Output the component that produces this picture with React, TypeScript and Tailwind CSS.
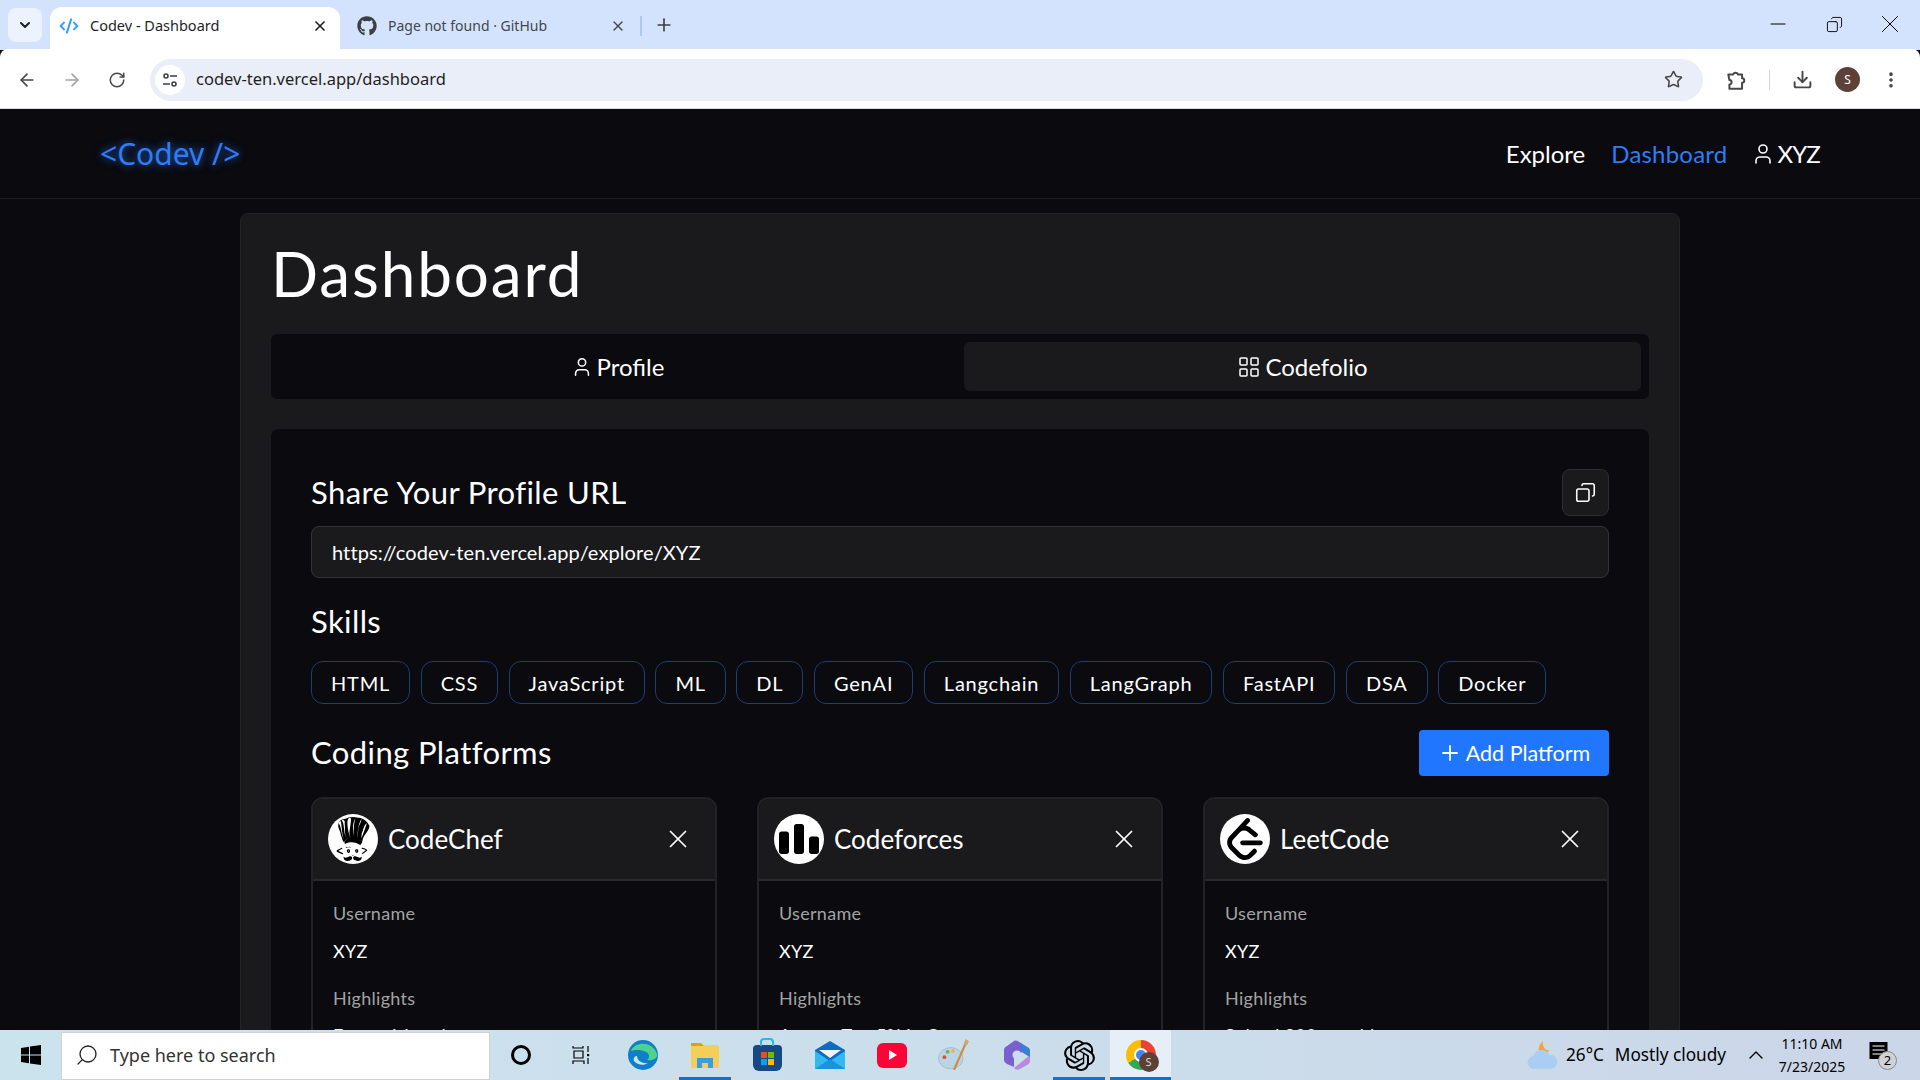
import { useState } from "react";
import { ArrowLeft, ArrowRight, ChevronDown, ChevronUp, CodeXml, Copy, Download, EllipsisVertical, LayoutGrid, Minus, Plus, RotateCw, Search, Star, User, X } from "lucide-react";
import { FaGithub } from "react-icons/fa";
import { SiCodechef, SiCodeforces, SiLeetcode, SiOpenai } from "react-icons/si";

const skills = ["HTML", "CSS", "JavaScript", "ML", "DL", "GenAI", "Langchain", "LangGraph", "FastAPI", "DSA", "Docker"];

const platforms = [
  { name: "CodeChef", logo: <SiCodechef size={44} />, highlight: "Expert I-Level" },
  { name: "Codeforces", logo: <SiCodeforces size={40} />, highlight: "Among Top 5% in Contests" },
  { name: "LeetCode", logo: <SiLeetcode size={42} />, highlight: "Solved 300+ problems" },
];

function BrowserChrome() {
  return (
    <div className="shrink-0 font-['Noto_Sans',sans-serif]">
      <div className="flex h-[50px] items-end bg-[#d3e3fd] pl-2">
        <div className="mb-[8px] mr-[8px] flex h-[34px] w-[34px] items-center justify-center rounded-lg bg-[#ecf2fe]">
          <ChevronDown size={16} strokeWidth={3} className="text-[#1f1f1f]" />
        </div>
        <div className="flex h-[43px] w-[290px] items-center rounded-t-xl bg-white pb-[6px] pl-[9px] pr-[12px]">
          <CodeXml size={20} strokeWidth={2.4} className="text-[#3b9cf6]" />
          <span className="ml-[11px] flex-1 text-[14.5px] text-[#1f1f1f]">Codev - Dashboard</span>
          <X size={16} strokeWidth={2.5} className="text-[#1f1f1f]" />
        </div>
        <div className="flex h-[43px] w-[316px] items-center pb-[6px] pl-[17px] pr-[14px]">
          <FaGithub size={20} className="text-[#3c4043]" />
          <span className="ml-[11px] flex-1 text-[14px] text-[#44474a]">Page not found · GitHub</span>
          <X size={16} strokeWidth={2} className="text-[#44474a]" />
          <span className="ml-[14px] h-5 w-[2px] bg-[#a8c7fa]" />
        </div>
        <div className="mb-[11px] ml-[-6px] flex h-[28px] w-[28px] items-center justify-center">
          <Plus size={20} strokeWidth={2} className="text-[#3c4043]" />
        </div>
        <div className="ml-auto flex h-[50px] items-center pb-[2px] pr-[2px] text-black">
          <div className="flex w-[56px] justify-center"><Minus size={24} strokeWidth={1} /></div>
          <div className="flex w-[56px] justify-center"><Copy size={17} strokeWidth={1.3} className="-scale-x-100" /></div>
          <div className="flex w-[56px] justify-center"><X size={30} strokeWidth={0.8} /></div>
        </div>
      </div>
      <div className="-mt-px flex h-[60px] items-center rounded-t-lg border-b border-[#dadce0] bg-white pl-[17px] pr-[19px] pt-[2px] text-[#474747]">
        <ArrowLeft size={20} strokeWidth={2} />
        <ArrowRight size={20} strokeWidth={2} className="ml-[25px] text-[#a3a3a3]" />
        <RotateCw size={18} strokeWidth={2} className="ml-[26px]" />
        <div className="ml-[24px] flex h-[42px] flex-1 items-center rounded-full bg-[#e9eef8] pl-[5px] pr-[20px]">
          <div className="flex h-[30px] w-[30px] items-center justify-center rounded-full bg-white">
            <svg viewBox="0 0 16 16" className="h-4 w-4" fill="none" stroke="#3c4043" strokeWidth="1.6">
              <circle cx="4" cy="4" r="2" /><path d="M8 4h7M1 12h7" /><circle cx="12" cy="12" r="2" />
            </svg>
          </div>
          <span className="ml-[11px] flex-1 text-[16.5px] text-[#1f1f1f]">codev-ten.vercel.app/dashboard</span>
          <Star size={19} strokeWidth={2} className="text-[#474747]" />
        </div>
        <svg viewBox="0 0 20 20" className="ml-[22px] h-[22px] w-[22px]" fill="none" stroke="#474747" strokeWidth="1.800" strokeLinejoin="round">
          <path d="M3 5h4.500a2.200 2.200 0 0 1 4.200 0H15.500v3.500a2 2 0 0 1 0 4v5.500H4v-4a2 2 0 0 0 0-4z" />
        </svg>
        <span className="ml-[22px] h-[20px] w-px bg-[#c5d9f7]" />
        <Download size={21} strokeWidth={2.2} className="ml-[22px]" />
        <div className="ml-[22px] flex h-[25px] w-[25px] items-center justify-center rounded-full bg-[#5d4037] text-[12px] text-white">S</div>
        <EllipsisVertical size={20} strokeWidth={2.4} className="ml-[21px]" />
      </div>
    </div>
  );
}

function Navbar() {
  return (
    <nav className="flex h-[90px] shrink-0 items-center justify-between border-b border-[#1f1f23] pl-[100px] pr-[100px]">
      <span className="text-[30px] text-[#2f7cf6] [text-shadow:0_0_8px_rgba(47,124,246,0.8)] font-['Noto_Sans',sans-serif]">&lt;Codev /&gt;</span>
      <div className="flex items-center text-[24px]">
        <span>Explore</span>
        <span className="ml-[26px] tracking-[0.2px] text-[#2f7cf6]">Dashboard</span>
        <User size={24} strokeWidth={1.6} className="ml-[24px] mr-[2px]" />
        <span className="tracking-[-0.8px]">XYZ</span>
      </div>
    </nav>
  );
}

function PlatformCard({ name, logo, highlight }: { name: string; logo: React.ReactNode; highlight: string }) {
  return (
    <div className="overflow-hidden rounded-xl border-2 border-[#232326]">
      <div className="flex h-[82px] items-center border-b-2 border-[#2a2a2d] bg-[#1a1a1d] pl-[15px] pr-[22px]">
        <div className="flex h-[50px] w-[50px] shrink-0 items-center justify-center rounded-full bg-white text-black">{logo}</div>
        <span className="ml-[10px] flex-1 text-[26px] leading-none">{name}</span>
        <X size={30} strokeWidth={1.4} />
      </div>
      <div className="px-5 pt-[18px] pb-6 text-[18px] leading-[28px] tracking-[0.3px]">
        <p className="text-[#a3a3a3]">Username</p>
        <p className="mt-[10px]">XYZ</p>
        <p className="mt-[19px] text-[#a3a3a3]">Highlights</p>
        <p className="mt-[9px]">{highlight}</p>
      </div>
    </div>
  );
}

function Taskbar() {
  return (
    <div className="relative z-10 flex h-[50px] shrink-0 items-center bg-gradient-to-r from-[#cbe3ed] via-[#cbdeeb] to-[#cbd6e8] font-['Noto_Sans',sans-serif] text-black">
      <div className="flex w-[61px] justify-center">
        <svg viewBox="0 0 20 20" className="h-[20px] w-[20px]" fill="#000">
          <path d="M0 3l8-1.200V9.500H0zM9 1.600L20 0v9.500H9zM0 10.500h8v7.700L0 17zM9 10.500h11V20L9 18.400z" />
        </svg>
      </div>
      <div className="flex h-[48px] w-[429px] items-center self-end border border-[#d0d0d0] bg-white pb-[2px] pl-[13px]">
        <Search size={24} strokeWidth={1.3} className="-scale-x-100 text-[#222]" />
        <span className="ml-[11px] text-[18px] text-[#333]">Type here to search</span>
      </div>
      <div className="flex w-[62px] justify-center">
        <span className="h-[20px] w-[20px] rounded-full border-[3px] border-black" />
      </div>
      <div className="flex w-[60px] justify-center">
        <svg viewBox="0 0 20 20" className="h-5 w-5" fill="none" stroke="#000" strokeWidth="1.200">
          <path d="M1 1v2h10V1M2 6h9v7H2zM1 19v-3h11v3M16 1v6M16 13v6" />
          <rect x="15" y="9" width="2.200" height="2.200" fill="#000" stroke="none" />
        </svg>
      </div>
      <div className="flex w-[62px] justify-center">
        <svg viewBox="0 0 30 30" className="h-[30px] w-[30px]">
          <circle cx="15" cy="15" r="15" fill="#0f7fc9" />
          <path d="M3 11C7 1 25 1 29 14c1 5-5 7-10 6 3-2 3-6-1-8C13 9 6 10 3 11z" fill="#4fd38c" />
          <path d="M9 16c0 5 6 8 11 7-4 3-11 2-14-2-1-3 1-5 3-5z" fill="#cbe3ed" />
        </svg>
      </div>
      <div className="relative flex h-[50px] w-[62px] items-center justify-center">
        <svg viewBox="0 0 28 26" className="h-[26px] w-[28px]">
          <path d="M0 3c0-1 1-2 2-2h8l2 2h14c1 0 2 1 2 2v19c0 1-1 2-2 2H2c-1 0-2-1-2-2z" fill="#f5ce57" />
          <path d="M0 1h10l3 3H0z" fill="#dba111" />
          <path d="M6 26v-10h16v10h-5v-5h-6v5z" fill="#3f9bdb" />
        </svg>
        <span className="absolute bottom-0 left-[5px] right-[5px] h-[3px] bg-[#0a74d0]" />
      </div>
      <div className="flex w-[62px] justify-center">
        <div className="relative mt-[6px] flex h-[26px] w-[29px] items-center justify-center rounded-b-md rounded-t-sm bg-[#174a84]">
          <span className="absolute -top-[7px] h-[8px] w-[14px] rounded-t border-2 border-b-0 border-[#2bb6ee]" />
          <span className="grid grid-cols-2 gap-px">
            <i className="h-[6px] w-[6px] bg-[#e8501f]" /><i className="h-[6px] w-[6px] bg-[#7ab800]" />
            <i className="h-[6px] w-[6px] bg-[#00a4ef]" /><i className="h-[6px] w-[6px] bg-[#ffb900]" />
          </span>
        </div>
      </div>
      <div className="flex w-[63px] justify-center">
        <svg viewBox="0 0 30 28" className="h-[28px] w-[30px]">
          <path d="M0 9L15 0l15 9v19H0z" fill="#0b6cc0" />
          <path d="M4 9h22L15 17z" fill="#f2f4f6" />
          <path d="M0 10l15 10 15-10v18H0z" fill="#32b9ef" />
          <path d="M0 28l15-10 15 10z" fill="#1a93de" />
        </svg>
      </div>
      <div className="flex w-[62px] justify-center">
        <div className="flex h-[25px] w-[30px] items-center justify-center rounded-md bg-[#fb0537]">
          <span className="ml-[2px] border-y-[5px] border-l-[8px] border-y-transparent border-l-white" />
        </div>
      </div>
      <div className="flex w-[62px] justify-center">
        <svg viewBox="0 0 30 30" className="h-[32px] w-[32px]">
          <ellipse cx="12" cy="18" rx="11.500" ry="10" fill="#b9d4e4" stroke="#8fa9ba" strokeWidth="0.500" />
          <circle cx="6" cy="17" r="1.800" fill="#e34c3c" /><circle cx="9" cy="12" r="1.800" fill="#6fb544" /><circle cx="14" cy="11" r="1.800" fill="#f2b33d" />
          <path d="M26 4L15 29" stroke="#d4893b" strokeWidth="2" />
          <path d="M24 5l2-5 3 2-2 4z" fill="#c9a875" />
        </svg>
      </div>
      <div className="flex w-[63px] justify-center">
        <svg viewBox="0 0 26 30" className="h-[30px] w-[26px]">
          <path d="M3 6l7-5c2-1 4 0 5 1l8 5c2 1 3 2 3 4v6l-8-5-8 6v9L3 24C1 23 0 21 0 20V10c0-2 1-3 3-4z" fill="#7a5fd0" />
          <path d="M26 15v6c0 2-1 3-3 4l-7 4c-2 1-3 1-5 0l-1-1 16-13z" fill="#b78ae0" />
          <path d="M15 2l8 5c2 1 3 2 3 4v6l-8-5z" fill="#3a7fd6" />
          <circle cx="13" cy="15" r="4.500" fill="#cbdeeb" />
        </svg>
      </div>
      <div className="relative flex h-[50px] w-[62px] items-center justify-center">
        <SiOpenai size={31} />
        <span className="absolute bottom-0 left-[5px] right-[5px] h-[3px] bg-[#0a74d0]" />
      </div>
      <div className="relative flex h-[50px] w-[61px] items-center justify-center bg-[#e6eff7]">
        <div className="relative h-[30px] w-[30px] rounded-full bg-[conic-gradient(#ea4335_0_33%,#34a853_33%_66%,#fbbc05_66%_100%)]">
          <span className="absolute left-[8px] top-[8px] h-[14px] w-[14px] rounded-full border-2 border-white bg-[#4285f4]" />
          <span className="absolute -bottom-[2px] -right-[3px] flex h-5 w-5 items-center justify-center rounded-full bg-[#5d4037] text-[11px] text-[#ddd]">S</span>
        </div>
        <span className="absolute bottom-0 left-0 right-0 h-[3px] bg-[#0a74d0]" />
      </div>
      <div className="ml-auto flex h-[50px] items-center pr-[15px]">
        <svg viewBox="0 0 30 28" className="h-[30px] w-[32px]">
          <path d="M12 12c-2-4-1-8 3-11-1 5 2 8 6 9-3 3-6 3-9 2z" fill="#eea83a" />
          <path d="M7 27a6 6 0 0 1-1-12 8 8 0 0 1 15-1 6.500 6.500 0 0 1 2 13z" fill="#a9cdf3" />
        </svg>
        <span className="ml-[7px] text-[17.2px] leading-none">26°C</span>
        <span className="ml-[11px] text-[17.2px] leading-none">Mostly cloudy</span>
        <ChevronUp size={24} strokeWidth={1.4} className="ml-[18px]" />
        <div className="ml-[6px] w-[76px] text-center text-[14px] leading-[23px]">
          <p>11:10 AM</p>
          <p>7/23/2025</p>
        </div>
        <div className="relative ml-[19px] h-[38px] w-[36px]">
          <svg viewBox="0 0 18 18" className="absolute left-0 top-[6px] h-[18px] w-[19px]">
            <path d="M0 0h18v17H0z" fill="#000" /><path d="M3 4h12M3 8h12M3 12h12" stroke="#fff" strokeWidth="1" />
          </svg>
          <span className="absolute left-[9px] top-[15px] flex h-[19px] w-[19px] items-center justify-center rounded-full border border-[#888] bg-[#cfd3d8] text-[13px] leading-none">2</span>
        </div>
      </div>
    </div>
  );
}

export default function App() {
  const [tab] = useState("codefolio");
  return (
    <div className="flex h-screen flex-col overflow-hidden bg-[#0a0a0f] font-['Lato','Noto_Sans',sans-serif] text-white">
      <BrowserChrome />
      <div className="min-h-0 flex-1 overflow-hidden">
        <Navbar />
        <main className="mx-auto mt-[14px] w-[1440px] rounded-lg border border-[#232326] bg-[#1a1a1d] px-[30px] pt-[22px] pb-8">
          <h1 className="text-[62px] leading-[75px] tracking-[1.9px]">Dashboard</h1>
          <div className="mt-[23px] grid h-[65px] grid-cols-2 gap-[8px] rounded-md bg-[#0a0a0f] p-[8px]">
            <button className={`flex items-center justify-center gap-[4px] rounded-md text-[24px] ${tab === "profile" ? "bg-[#1a1a1d]" : ""}`}>
              <User size={22} strokeWidth={1.7} /> Profile
            </button>
            <button className={`flex items-center justify-center gap-[4px] rounded-md text-[24px] ${tab === "codefolio" ? "bg-[#1a1a1d]" : ""}`}>
              <LayoutGrid size={24} strokeWidth={1.5} /> Codefolio
            </button>
          </div>
          <section className="mt-[30px] rounded-lg bg-[#0a0a0f] px-[40px] pt-[40px] pb-10">
            <div className="flex h-[47px] items-center justify-between">
              <h2 className="text-[31px] leading-none tracking-[0.4px]">Share Your Profile URL</h2>
              <button className="flex h-[47px] w-[47px] items-center justify-center rounded-lg border border-[#2e2e32] bg-[#1a1a1d]">
                <Copy size={21} strokeWidth={1.8} className="-scale-x-100" />
              </button>
            </div>
            <div className="mt-[10px] flex h-[52px] items-center rounded-lg border border-[#333336] bg-[#1a1a1d] px-5 text-[20px] tracking-[0.1px]">
              https://codev-ten.vercel.app/explore/XYZ
            </div>
            <h2 className="mt-[23px] text-[31px] leading-[40px] tracking-[0.4px]">Skills</h2>
            <div className="mt-[20px] flex gap-[10.5px]">
              {skills.map((s) => (
                <span key={s} className="flex h-[43px] items-center rounded-xl border border-[#1e3f75] px-[19px] text-[20px] tracking-[0.8px]">{s}</span>
              ))}
            </div>
            <div className="mt-[26px] flex h-[46px] items-center justify-between">
              <h2 className="pb-[2px] text-[31px] leading-none tracking-[0.4px]">Coding Platforms</h2>
              <button className="flex h-[46px] w-[190px] items-center justify-center gap-[4px] rounded bg-[#2176ff] text-[21.5px]">
                <Plus size={24} strokeWidth={1.8} /> Add Platform
              </button>
            </div>
            <div className="mt-[21px] grid grid-cols-3 gap-[40px]">
              {platforms.map((p) => (
                <PlatformCard key={p.name} {...p} />
              ))}
            </div>
          </section>
        </main>
      </div>
      <Taskbar />
    </div>
  );
}
